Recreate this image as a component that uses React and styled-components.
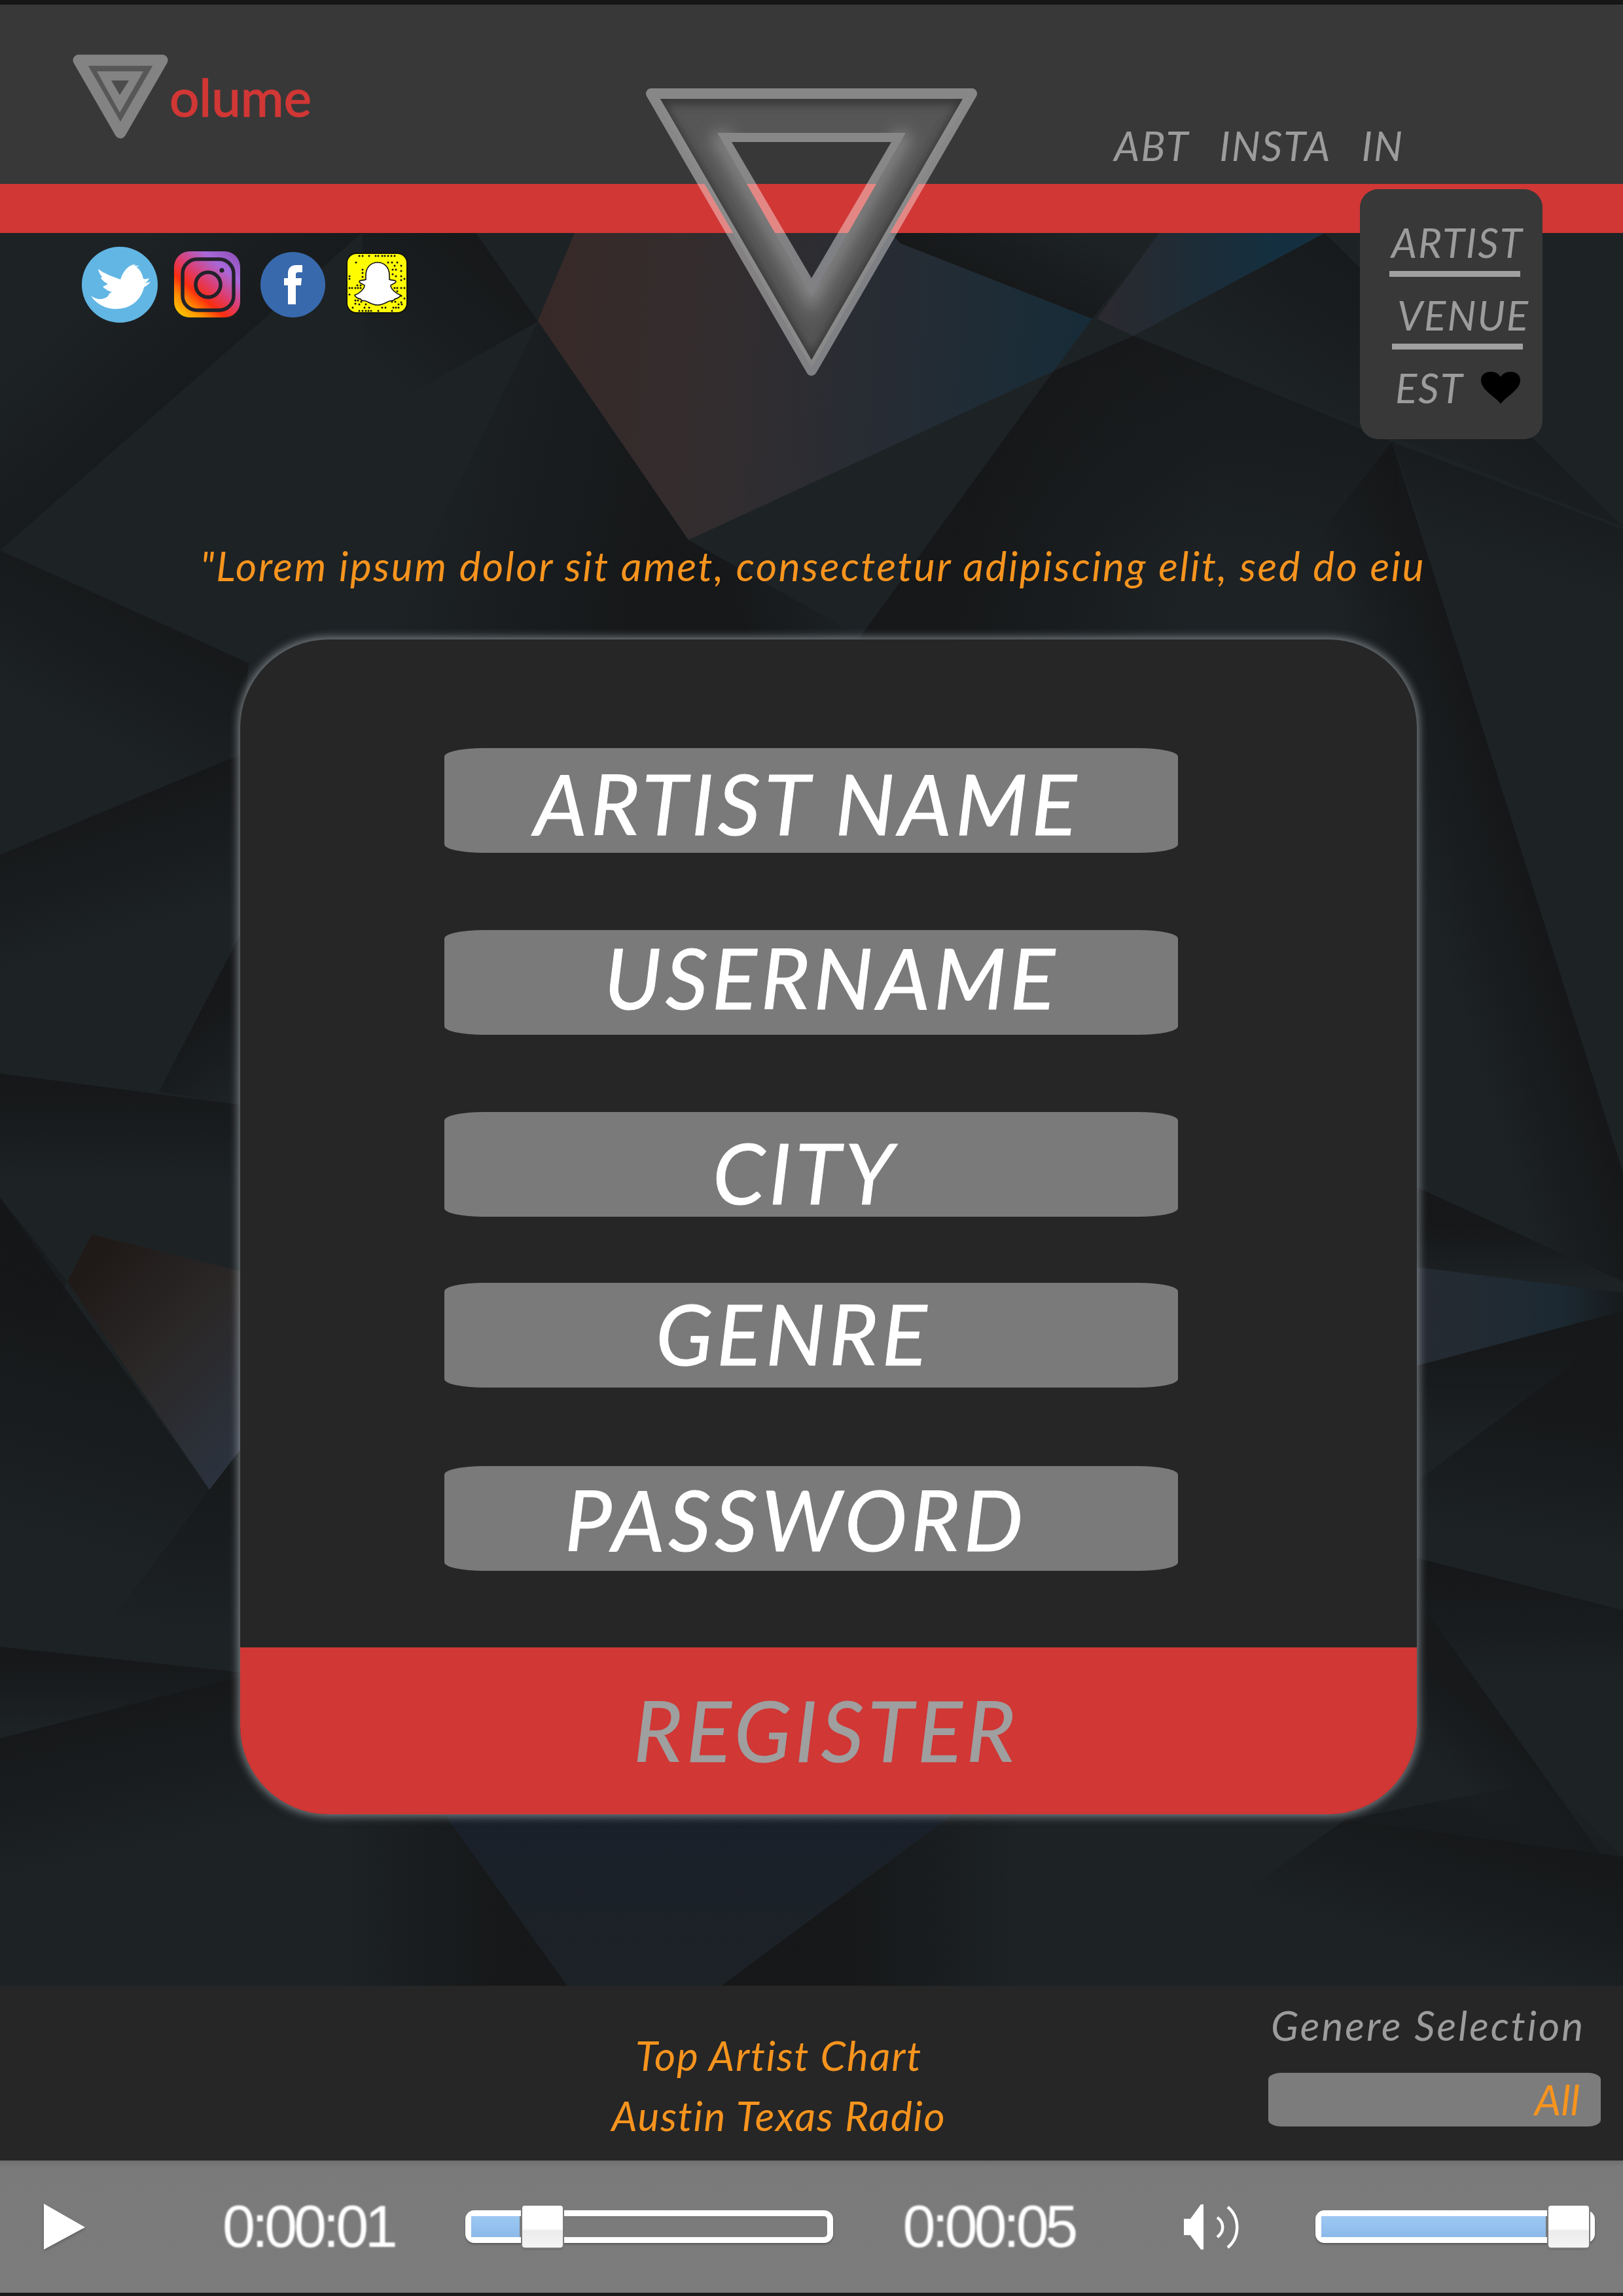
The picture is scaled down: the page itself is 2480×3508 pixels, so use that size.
import React from "react";
import styled, { createGlobalStyle } from "styled-components";

const SANS = `"Lato", "Liberation Sans", sans-serif`;
const RED = "#d03735";
const ORANGE = "#f7941e";
const GREY_TEXT = "#9c9c9c";

const GlobalStyle = createGlobalStyle`
  html, body { margin: 0; padding: 0; background: #1c2023; }
  * { box-sizing: border-box; }
`;

const DARK = "#141516";

// background facets, page coordinates; each one fades from the fold to nothing
const facets = [
  { pts: "553,356 0,841 0,356", from: [280, 600], to: [130, 440], strength: 0.55 },
  { pts: "553,356 727,356 822,491 560,640", from: [740, 370], to: [560, 560] },
  { pts: "822,491 1052,825 1155,975 585,975", from: [1010, 770], to: [640, 700] },
  { pts: "1052,825 1155,975 1320,975", from: [1110, 900], to: [1290, 860] },
  { pts: "1610,567 1732,513 2127,675 2200,1150 1900,1150 1313,975", from: [1500, 720], to: [1850, 800] },
  { pts: "1610,567 1732,513 2127,675 2200,1150 1900,1150 1313,975", from: [1800, 540], to: [1740, 860], strength: 0.6 },
  { pts: "2127,675 2480,809 2480,1100 2240,1000", from: [2290, 730], to: [2250, 860], strength: 0.45 },
  { pts: "2127,675 2480,1791 2480,1958 2163,1813 2163,1150 1950,1150 1950,900", from: [2320, 1300], to: [2167, 1347], strength: 0.85 },
  { pts: "2024,356 2480,805 1732,513", from: [2120, 450], to: [1990, 640], strength: 0.6 },
  { pts: "1376,372 1669,487 1771,356 1360,356", from: [1520, 427], to: [1570, 320], strength: 0.7 },
  { pts: "0,841 380,1013 367,1153 0,1306", from: [190, 925], to: [90, 1110], strength: 0.7 },
  { pts: "0,1306 367,1153 367,1428 243,1668 0,1640", from: [180, 1225], to: [240, 1420] },
  { pts: "243,1668 367,1428 367,1688", from: [290, 1565], to: [365, 1665] },
  { pts: "0,1640 367,1688 367,1942 0,1855", from: [180, 1665], to: [180, 1810] },
  { pts: "0,1830 320,2276 130,2528 0,2516", from: [140, 2030], to: [50, 2360] },
  { pts: "0,1830 103,1958 0,2170", from: [70, 1880], to: [0, 2040], strength: 0.6 },
  { pts: "320,2276 367,2215 367,2555 130,2528", from: [340, 2270], to: [330, 2500], strength: 0.65 },
  { pts: "0,2516 367,2555 367,2561 0,2656", from: [180, 2535], to: [180, 2640] },
  { pts: "0,2656 367,2561 680,2773 300,3034 0,3034", from: [180, 2605], to: [230, 2830] },
  { pts: "300,2773 680,2773 867,3034 500,3034", from: [770, 2900], to: [520, 2900] },
  { pts: "1455,2773 2056,2780 1800,3034 1102,3034", from: [1290, 2900], to: [1560, 2900] },
  { pts: "2056,2780 2480,2837 2480,3034 1700,3034", from: [2280, 2805], to: [2220, 3000] },
  { pts: "2364,2720 2480,2837 2056,2780", from: [2300, 2815], to: [2340, 2720], strength: 0.5 },
  { pts: "2163,1813 2480,1958 2480,1975 2163,1936", from: [2300, 1875], to: [2300, 1960] },
  { pts: "2163,2087 2480,2003 2480,2025 2163,2265", from: [2300, 2060], to: [2300, 2210] },
  { pts: "2163,2265 2480,2025 2480,2460 2163,2380", from: [2330, 2150], to: [2300, 2360] },
  { pts: "2163,2380 2480,2460 2480,2840 2447,2835 2163,2438", from: [2300, 2415], to: [2300, 2570] },
  { pts: "2163,2438 2447,2835 2130,2784", from: [2300, 2650], to: [2230, 2730], strength: 0.7 },
];

const Backdrop = () => (
  <BackdropSvg viewBox="0 356 2480 2678" preserveAspectRatio="none">
    <defs>
      {facets.map((f, i) => (
        <linearGradient key={i} id={`facet${i}`} gradientUnits="userSpaceOnUse" x1={f.from[0]} y1={f.from[1]} x2={f.to[0]} y2={f.to[1]}>
          <stop offset="0" stopColor={DARK} stopOpacity={f.strength || 0.8} />
          <stop offset="1" stopColor={DARK} stopOpacity="0" />
        </linearGradient>
      ))}
      <linearGradient id="warmShard" gradientUnits="userSpaceOnUse" x1="822" y1="500" x2="1669" y2="560">
        <stop offset="0" stopColor="#382928" />
        <stop offset="0.35" stopColor="#322d2f" />
        <stop offset="0.62" stopColor="#272c34" />
        <stop offset="1" stopColor="#162c38" />
      </linearGradient>
      <linearGradient id="blueShard" gradientUnits="userSpaceOnUse" x1="1700" y1="420" x2="1950" y2="420">
        <stop offset="0" stopColor="#2a2a30" />
        <stop offset="0.5" stopColor="#1d2c37" />
        <stop offset="1" stopColor="#143040" />
      </linearGradient>
      <linearGradient id="leftWarm" gradientUnits="userSpaceOnUse" x1="110" y1="1960" x2="367" y2="2210">
        <stop offset="0" stopColor="#1f1a18" />
        <stop offset="0.5" stopColor="#2b2828" />
        <stop offset="1" stopColor="#2b323d" />
      </linearGradient>
      <linearGradient id="rightBlue" gradientUnits="userSpaceOnUse" x1="2165" y1="2000" x2="2480" y2="2000">
        <stop offset="0" stopColor="#262b33" />
        <stop offset="0.7" stopColor="#1c2932" />
        <stop offset="1" stopColor="#161a1c" />
      </linearGradient>
      <linearGradient id="lowWedge" gradientUnits="userSpaceOnUse" x1="1000" y1="2773" x2="1000" y2="3034">
        <stop offset="0" stopColor="#19202a" />
        <stop offset="1" stopColor="#1c2226" />
      </linearGradient>
    </defs>
    <rect x="0" y="356" width="2480" height="2678" fill="#1d2225" />
    {facets.map((f, i) => (
      <polygon key={i} points={f.pts} fill={`url(#facet${i})`} />
    ))}
    <polygon points="878,356 822,490 1052,825 1610,567 1669,487 1376,372 1360,356" fill="url(#warmShard)" />
    <polygon points="1771,356 1676,487 1732,513 2024,356" fill="url(#blueShard)" />
    <polygon points="103,1958 140,1886 367,1942 367,2215 320,2276" fill="url(#leftWarm)" />
    <polygon points="2163,1936 2480,1975 2480,2003 2163,2087" fill="url(#rightBlue)" />
    <polygon points="680,2773 1455,2773 1102,3034 867,3034" fill="url(#lowWedge)" />
  </BackdropSvg>
);

const SmallMark = () => (
  <MarkSvg viewBox="0 0 146 129" width="146" height="129">
    <polygon points="9,9 137,9 73,120" fill="#575757" stroke="#838383" strokeWidth="17" strokeLinejoin="round" />
    <polygon points="37,26 108,26 72,89" fill="#838383" />
    <polygon points="59,40 86,40 72,62" fill="#4c4c4c" />
  </MarkSvg>
);

const OUTER = "995,143 1485,143 1240,566";
const INNER = "1096,203 1384,203 1240,453";
const HOLE = "1118,217 1362,217 1240,425";

const BigMark = () => (
  <BigMarkSvg viewBox="960 110 560 480" width="560" height="480">
    <defs>
      <filter id="soft6" x="-20%" y="-20%" width="140%" height="140%"><feGaussianBlur stdDeviation="7" /></filter>
      <filter id="soft9" x="-20%" y="-20%" width="140%" height="140%"><feGaussianBlur stdDeviation="12" /></filter>
      <clipPath id="ringClip">
        <path clipRule="evenodd" d="M1000 150 H1480 L1240 561 Z M1096 203 L1240 453 L1384 203 Z" />
      </clipPath>
    </defs>
    <g clipPath="url(#ringClip)">
      <rect x="960" y="110" width="560" height="480" fill="#565656" />
      <polygon points="1000,150 1240,561 1480,150" fill="none" stroke="#383838" strokeWidth="20" filter="url(#soft6)" />
      <line x1="990" y1="150" x2="1490" y2="150" stroke="#a0a0a0" strokeWidth="20" filter="url(#soft6)" />
      <polyline points="1096,203 1240,453 1384,203" fill="none" stroke="#858585" strokeWidth="26" filter="url(#soft9)" />
      <line x1="1105" y1="203" x2="1375" y2="203" stroke="#1c1c1c" strokeWidth="18" filter="url(#soft6)" />
    </g>
    <polygon points={OUTER} fill="none" stroke="#fff" strokeOpacity="0.4" strokeWidth="16" strokeLinejoin="round" />
    <path fillRule="evenodd" fill="#fff" fillOpacity="0.4" d={`M${INNER.replace(/ /g, " L")} Z M${HOLE.replace(/ /g, " L")} Z`} />
  </BigMarkSvg>
);

const TwitterIcon = () => (
  <svg viewBox="0 0 116 116" width="116" height="116">
    <circle cx="58" cy="58" r="58" fill="#62b6e4" />
    <path fill="#fff" d="M14 75 C20 85 34 95 52 95 C76 95 91 80 95 62 C98 60 102 58 105 53 C102 55 99 55 97 55 C100 53 102 51 103 48 C100 49 97 50 94 49 C92 40 88 33 83 31 L88 29 L80 29 L82 27 C74 27 64 34 59 50 C48 46 34 41 25 34 C26 39 28 43 31 46 L29 48 C32 52 36 55 40 57 L32 61 C36 65 41 68 46 69 C43 71 41 72 41 74 C38 79 26 84 14 75 Z" />
  </svg>
);

const InstagramIcon = () => (
  <svg viewBox="0 0 101 101" width="101" height="101">
    <defs>
      <linearGradient id="igGrad" x1="0.08" y1="1" x2="0.88" y2="0.04">
        <stop offset="0" stopColor="#ffd000" />
        <stop offset="0.2" stopColor="#ff8a00" />
        <stop offset="0.36" stopColor="#fb2d10" />
        <stop offset="0.55" stopColor="#dd3d70" />
        <stop offset="0.8" stopColor="#a868da" />
        <stop offset="1" stopColor="#9455c0" />
      </linearGradient>
    </defs>
    <rect width="101" height="101" rx="24" fill="url(#igGrad)" />
    <rect x="13" y="12" width="78" height="78" rx="22" fill="none" stroke="#23222a" strokeWidth="5.5" />
    <circle cx="52" cy="51" r="19" fill="none" stroke="#23222a" strokeWidth="5.5" />
    <circle cx="73" cy="29" r="3.6" fill="#23222a" />
  </svg>
);

const FacebookIcon = () => (
  <svg viewBox="0 0 99 100" width="99" height="100">
    <ellipse cx="49.5" cy="50" rx="49.5" ry="50" fill="#3869ad" />
    <path fill="#fff" d="M42 80 V51 H36 V40 H42 V33 C42 24 47 20 55 20 H64 V31 H58 C55 31 54 32 54 35 V40 H63 L62 51 H54 V80 Z" />
  </svg>
);

const snapDots = [
  [20, 5], [25, 5], [35, 5], [45, 5], [49, 5], [55, 5], [59, 5], [64, 5], [69, 5], [74, 5],
  [15, 15], [64, 15], [70, 15], [78, 15], [74, 20], [84, 20], [25, 26], [25, 31], [71, 26], [76, 26], [84, 28],
  [5, 36], [5, 40], [25, 37], [71, 33], [76, 36], [84, 36], [89, 40], [84, 42],
  [5, 54], [9, 54], [14, 54], [18, 54], [22, 54], [17, 50], [22, 50], [74, 54], [78, 54], [84, 54], [89, 54], [78, 59],
  [5, 64], [84, 66], [89, 70], [84, 76],
  [14, 73], [18, 73], [23, 75], [14, 78], [20, 79], [30, 79], [70, 75], [75, 75], [80, 79], [85, 79],
  [10, 84], [28, 84], [35, 84], [55, 84], [60, 84], [72, 84], [76, 84], [80, 84],
  [20, 89], [25, 89], [30, 89], [34, 89], [38, 89], [49, 89], [70, 89],
];

const SnapIcon = () => (
  <svg viewBox="0 0 94 93" width="94" height="93">
    <rect x="1" y="1" width="92" height="91" rx="15" fill="#fffc00" stroke="#111" strokeWidth="2" />
    {snapDots.map(([x, y]) => (
      <circle key={`${x}-${y}`} cx={x} cy={y} r="1.5" fill="#111" />
    ))}
    <path fill="#fff" stroke="#111" strokeWidth="1.6" d="M48 15 C37 15 30 23 30 35 L30 41 C27 43 21 41 20 44 C20 47 26 48 28 50 C28 55 21 62 13 65 C14 69 19 70 22 71 C23 74 26 73 30 74 C34 75 39 80 48 80 C57 80 62 75 66 74 C70 73 73 74 74 71 C77 70 82 69 83 65 C75 62 68 55 68 50 C70 48 76 47 76 44 C75 41 69 43 66 41 L66 35 C66 23 59 15 48 15 Z" />
  </svg>
);

const Heart = () => (
  <svg viewBox="0 0 60 49" width="60" height="49">
    <path fill="#000" d="M30 49 C22 38 0 28 0 13 C0 4 7 0 15 0 C22 0 27 3 30 8 C33 3 38 0 45 0 C53 0 60 4 60 13 C60 28 38 38 30 49 Z" />
  </svg>
);

const SpeakerIcon = () => (
  <svg viewBox="0 0 86 73" width="86" height="73">
    <path fill="#fff" d="M2 24 H12 L28 2 H32 V71 H28 L12 49 H2 Z" />
    <path fill="none" stroke="#fff" strokeWidth="4.5" d="M53 22 C64 30 64 44 53 52 M69 6 C88 22 88 52 69 68" />
  </svg>
);

const PlayIcon = () => (
  <svg viewBox="0 0 63 70" width="63" height="70">
    <polygon points="0,0 63,36 0,70" fill="#fff" />
  </svg>
);

const socials = [
  { Icon: TwitterIcon, left: 0, top: 0 },
  { Icon: InstagramIcon, left: 25, top: 7 },
  { Icon: FacebookIcon, left: 31, top: 8 },
  { Icon: SnapIcon, left: 32, top: 9 },
];

const fields = [
  { label: "ARTIST NAME", indent: 137, gap: 0, nudge: 4 },
  { label: "USERNAME", indent: 244, gap: 118, nudge: -8 },
  { label: "CITY", indent: 410, gap: 118, nudge: 12 },
  { label: "GENRE", indent: 323, gap: 101, nudge: -3 },
  { label: "PASSWORD", indent: 184, gap: 120, nudge: 1 },
];

const Slider = ({ width, value, thumbAt }) => (
  <SliderTrack $width={width}>
    <SliderFill style={{ width: value }} />
    <SliderThumb style={{ left: thumbAt }} />
  </SliderTrack>
);

export default function App() {
  return (
    <Page>
      <GlobalStyle />
      <Header>
        <Brand>
          <SmallMark />
          <BrandWord>olume</BrandWord>
        </Brand>
        <TopNav>
          <NavLink>ABT</NavLink>
          <NavLink>INSTA</NavLink>
          <NavLink>IN</NavLink>
        </TopNav>
      </Header>
      <RedBar />
      <BigMark />
      <Menu>
        <MenuItem $indent={48} $rule={0}>ARTIST</MenuItem>
        <MenuItem $indent={57} $rule={4}>VENUE</MenuItem>
        <MenuItem $indent={54}>
          EST
          <Heart />
        </MenuItem>
      </Menu>

      <Main>
        <Backdrop />
        <Socials>
          {socials.map(({ Icon, left, top }, i) => (
            <SocialLink key={i} $left={left} $top={top}>
              <Icon />
            </SocialLink>
          ))}
        </Socials>
        <Quote>"Lorem ipsum dolor sit amet, consectetur adipiscing elit, sed do eiu</Quote>
        <Card>
          <FieldList>
            {fields.map((f) => (
              <Field key={f.label} $gap={f.gap} $indent={f.indent} $nudge={f.nudge}>
                {f.label}
              </Field>
            ))}
          </FieldList>
          <RegisterBar>REGISTER</RegisterBar>
        </Card>
      </Main>

      <InfoBar>
        <ChartTitle>
          <div>Top Artist Chart</div>
          <div>Austin Texas Radio</div>
        </ChartTitle>
        <GenreBox>
          <GenreLabel>Genere Selection</GenreLabel>
          <GenreSelect>All</GenreSelect>
        </GenreBox>
      </InfoBar>

      <Player>
        <PlayIcon />
        <TimeCode $left={210}>0:00:01</TimeCode>
        <SliderSlot $left={109}>
          <Slider width={562} value={74} thumbAt={78} />
        </SliderSlot>
        <TimeCode $left={106}>0:00:05</TimeCode>
        <SliderSlot $left={165}>
          <SpeakerIcon />
        </SliderSlot>
        <SliderSlot $left={117}>
          <Slider width={427} value={343} thumbAt={347} />
        </SliderSlot>
      </Player>
      <BottomEdge />
    </Page>
  );
}

const Page = styled.div`
  position: relative;
  width: 2480px;
  height: 3508px;
  overflow: hidden;
  display: flex;
  flex-direction: column;
  font-family: ${SANS};
`;

const Header = styled.header`
  height: 281px;
  border-top: 7px solid #161616;
  background: #383838;
  display: flex;
  justify-content: space-between;
`;

const Brand = styled.div`
  display: flex;
  align-items: flex-start;
  padding: 76px 0 0 111px;
`;

const MarkSvg = styled.svg`
  flex: none;
`;

const BrandWord = styled.span`
  margin: 16px 0 0 2px;
  font-size: 80px;
  line-height: 96px;
  color: ${RED};
  -webkit-text-stroke: 1.6px ${RED};
`;

const TopNav = styled.nav`
  display: flex;
  gap: 46px;
  padding: 178px 335px 0 0;
`;

const NavLink = styled.a`
  font-size: 62px;
  line-height: 74px;
  font-style: italic;
  letter-spacing: 2px;
  color: ${GREY_TEXT};
`;

const RedBar = styled.div`
  height: 75px;
  flex: none;
  background: ${RED};
`;

const BigMarkSvg = styled.svg`
  position: absolute;
  left: 960px;
  top: 110px;
  z-index: 3;
`;

const Menu = styled.div`
  position: absolute;
  left: 2078px;
  top: 289px;
  width: 279px;
  height: 382px;
  padding-top: 46px;
  background: #383838;
  border-radius: 28px;
  z-index: 4;
`;

const MenuItem = styled.div`
  display: flex;
  align-items: center;
  gap: 26px;
  height: 71px;
  margin: 0 30px 40px 45px;
  padding-left: ${(p) => p.$indent - 45}px;
  font-size: 62px;
  line-height: 71px;
  font-style: italic;
  letter-spacing: 2px;
  color: ${GREY_TEXT};
  position: relative;
  ${(p) =>
    p.$rule !== undefined &&
    `&::after {
      content: "";
      position: absolute;
      left: ${p.$rule}px;
      width: 200px;
      bottom: -17px;
      height: 9px;
      background: #a0a0a0;
    }`}
`;

const Main = styled.main`
  position: relative;
  flex: 1;
  display: flex;
  flex-direction: column;
  min-height: 0;
`;

const BackdropSvg = styled.svg`
  position: absolute;
  inset: 0;
  width: 100%;
  height: 100%;
`;

const Socials = styled.div`
  position: relative;
  display: flex;
  align-items: flex-start;
  height: 116px;
  margin: 21px 0 0 125px;
`;

const SocialLink = styled.a`
  display: block;
  line-height: 0;
  margin-left: ${(p) => p.$left}px;
  margin-top: ${(p) => p.$top}px;
`;

const Quote = styled.p`
  position: relative;
  margin: 336px 0 0 306px;
  font-size: 62px;
  line-height: 70px;
  font-style: italic;
  letter-spacing: 2.6px;
  color: ${ORANGE};
  white-space: nowrap;
`;

const Card = styled.section`
  position: relative;
  width: 1798px;
  height: 1795px;
  margin: 78px 0 0 367px;
  background: #262626;
  border-radius: 135px;
  box-shadow: 0 0 14px 3px rgba(190, 198, 204, 0.6);
  display: flex;
  flex-direction: column;
  overflow: hidden;
`;

const FieldList = styled.div`
  flex: 1;
  padding: 166px 0 0 312px;
`;

const Field = styled.div`
  width: 1121px;
  height: 160px;
  margin-top: ${(p) => p.$gap}px;
  padding-left: ${(p) => p.$indent}px;
  background: #7a7a7a;
  border-radius: 60px / 13px;
  font-size: 128px;
  line-height: ${(p) => 160 + 2 * p.$nudge}px;
  font-style: italic;
  letter-spacing: 6px;
  -webkit-text-stroke: 1px #fff;
  color: #fff;
  white-space: nowrap;
`;

const RegisterBar = styled.div`
  height: 255px;
  flex: none;
  background: ${RED};
  padding-left: 601px;
  font-size: 128px;
  line-height: 251px;
  font-style: italic;
  letter-spacing: 6px;
  -webkit-text-stroke: 1px #9f9f9f;
  color: #9f9f9f;
`;

const InfoBar = styled.div`
  height: 267px;
  flex: none;
  background: #262626;
  position: relative;
  display: flex;
`;

const ChartTitle = styled.div`
  width: 2380px;
  padding-top: 60px;
  text-align: center;
  font-size: 62px;
  line-height: 92px;
  font-style: italic;
  letter-spacing: 1.8px;
  color: ${ORANGE};
`;

const GenreBox = styled.div`
  position: absolute;
  left: 1938px;
  top: 24px;
  width: 508px;
`;

const GenreLabel = styled.div`
  font-size: 62px;
  line-height: 72px;
  padding-left: 4px;
  font-style: italic;
  letter-spacing: 3px;
  color: ${GREY_TEXT};
  white-space: nowrap;
`;

const GenreSelect = styled.div`
  margin-top: 37px;
  height: 82px;
  padding-right: 32px;
  background: #7c7c7c;
  border-radius: 20px / 10px;
  text-align: right;
  font-size: 64px;
  line-height: 82px;
  font-style: italic;
  color: ${ORANGE};
`;

const Player = styled.div`
  height: 202px;
  flex: none;
  display: flex;
  align-items: center;
  padding-left: 67px;
  background: linear-gradient(#6f6f6f 0, #7a7a7a 10px, #7c7c7c 100%);
  & > svg {
    filter: drop-shadow(0 2px 2px rgba(0, 0, 0, 0.25));
  }
`;

const TimeCode = styled.span`
  margin-left: ${(p) => p.$left}px;
  font-family: "Liberation Sans", Arial, sans-serif;
  font-size: 90px;
  line-height: 90px;
  letter-spacing: -5.4px;
  color: #fff;
  filter: blur(0.8px);
`;

const SliderSlot = styled.div`
  margin-left: ${(p) => p.$left}px;
  display: flex;
  align-items: center;
`;

const SliderTrack = styled.div`
  position: relative;
  width: ${(p) => p.$width}px;
  height: 50px;
  border: 9px solid #fff;
  border-radius: 14px;
  box-shadow: 0 2px 3px rgba(0, 0, 0, 0.3);
  filter: blur(0.5px);
`;

const SliderFill = styled.div`
  position: absolute;
  left: 0;
  top: 0;
  bottom: 0;
  background: linear-gradient(#9cc8f2, #8bb9ea);
`;

const SliderThumb = styled.div`
  position: absolute;
  top: -16px;
  width: 62px;
  height: 64px;
  border-radius: 4px;
  background: linear-gradient(#fff 0, #fff 55%, #ececec 60%, #f4f4f4 100%);
  box-shadow: 0 0 0 2px #7a7a7a, 0 2px 3px rgba(0, 0, 0, 0.35);
`;

const BottomEdge = styled.div`
  height: 5px;
  flex: none;
  background: #1b1b1b;
`;
